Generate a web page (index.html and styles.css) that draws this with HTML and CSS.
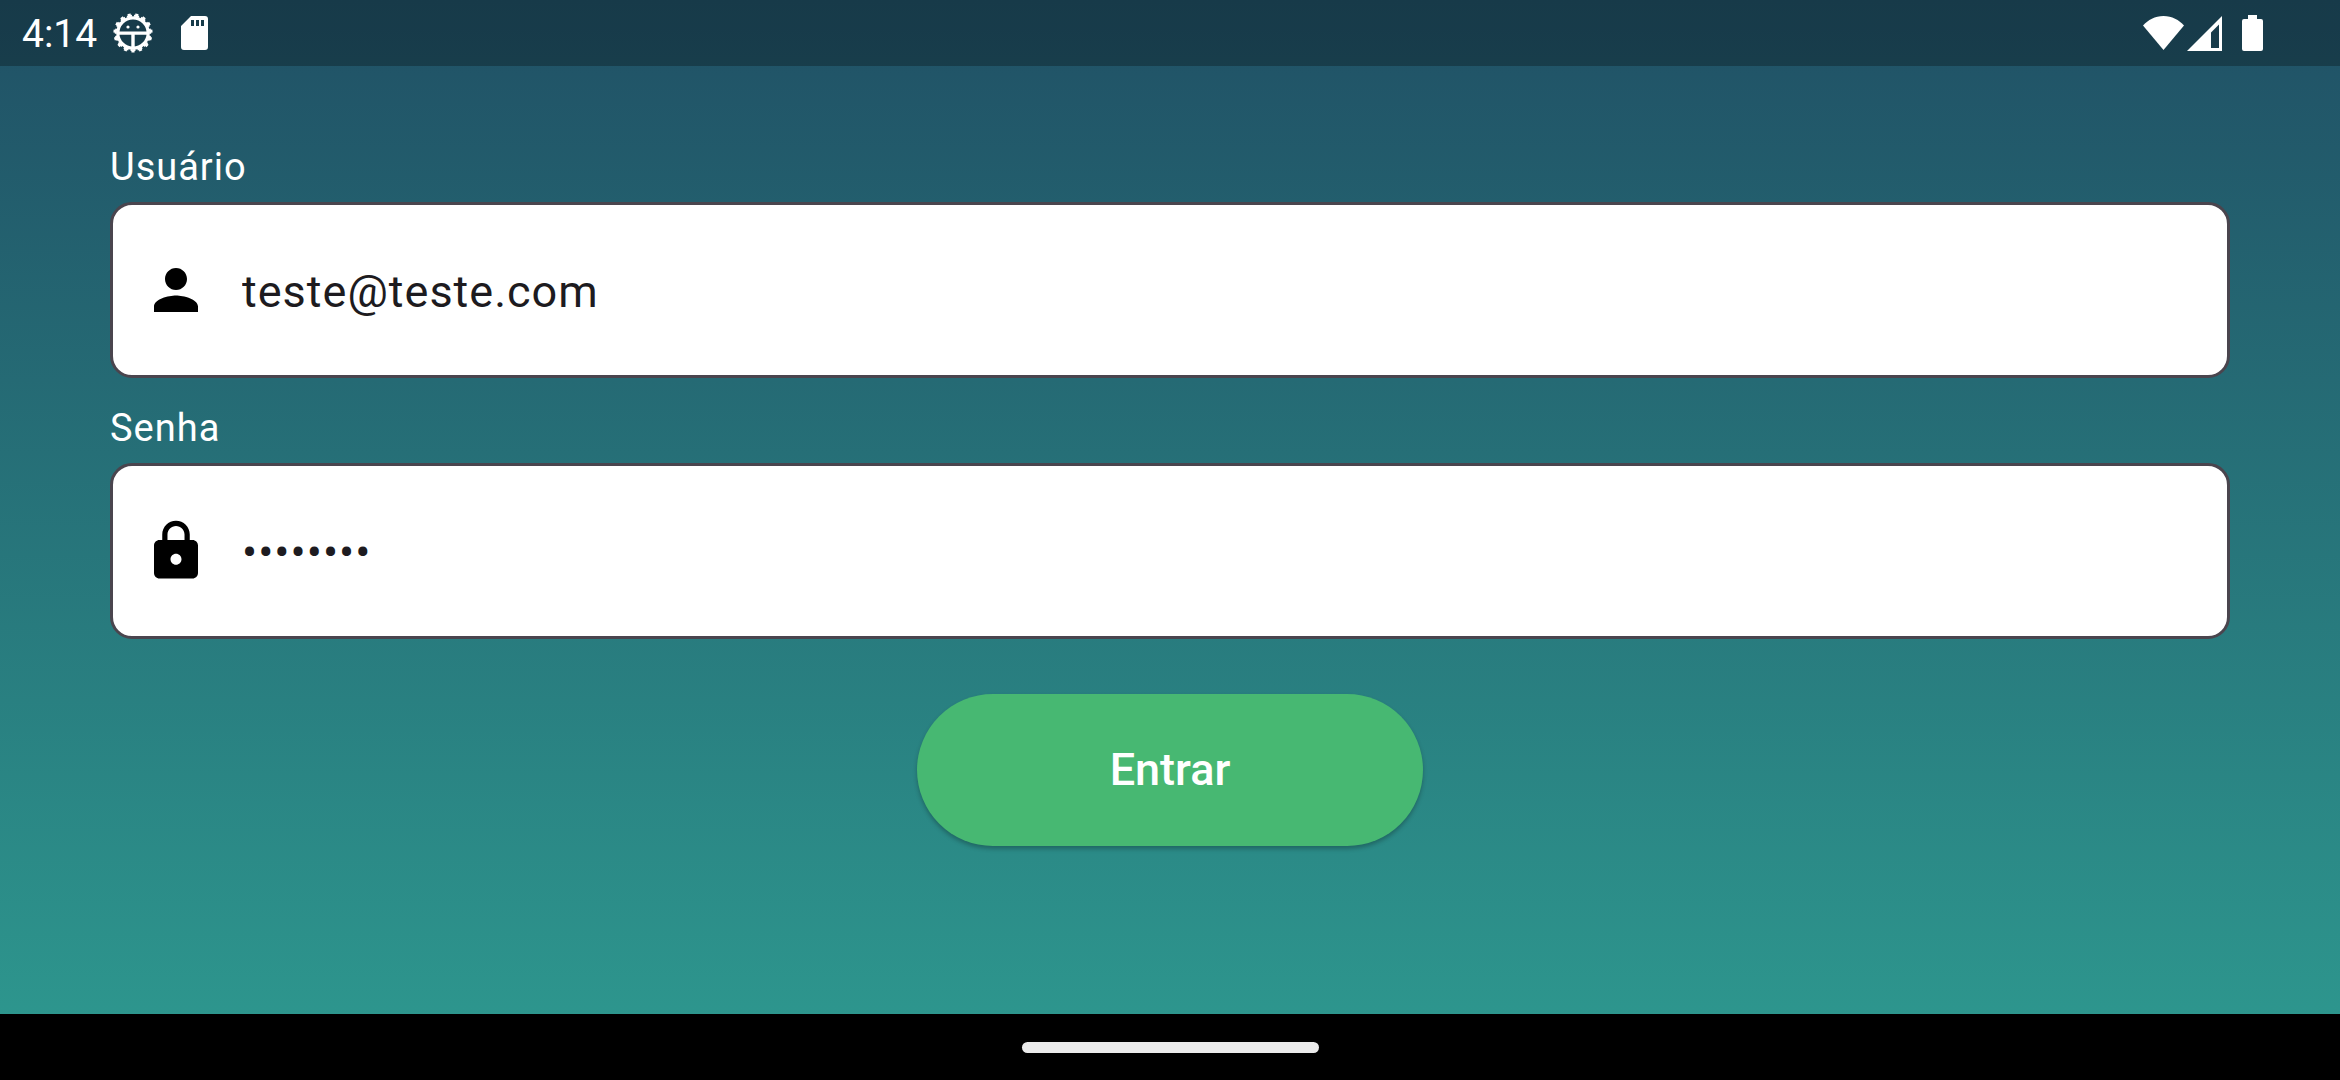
FILE: index.html
```html
<!DOCTYPE html>
<html lang="pt-BR">
<head>
<meta charset="utf-8">
<meta name="viewport" content="width=device-width, initial-scale=1">
<title>Entrar</title>
<link rel="stylesheet" href="styles.css">
</head>
<body>
<div class="screen">
  <header class="status-bar">
    <time class="clock">4:14</time>
    <svg class="status-icon gear" viewBox="0 0 40 40" aria-hidden="true">
      <g fill="none" stroke="currentColor">
        <circle cx="20" cy="20" r="15.200" stroke-width="3.200"/>
        <circle cx="20" cy="20" r="17.200" stroke-width="2" pathLength="150" stroke-dasharray="7 3" stroke-dashoffset="6"/>
        <circle cx="20" cy="20" r="18.600" stroke-width="2" pathLength="150" stroke-dasharray="4 6" stroke-dashoffset="4.500"/>
      </g>
      <path d="M6 18.500h28v3.200H21.700V35h-3.400V21.700H6z" fill="currentColor"/>
      <circle cx="15" cy="14" r="1.600" fill="currentColor"/>
      <circle cx="25" cy="14" r="1.600" fill="currentColor"/>
    </svg>
    <svg class="status-icon card" viewBox="0 0 27 34" aria-hidden="true">
      <path fill="currentColor" fill-rule="evenodd" d="M10 0h14a3 3 0 0 1 3 3v28a3 3 0 0 1-3 3H3a3 3 0 0 1-3-3V10zM10 4v6h3V4zm5 0v6h3V4zm5 0v6h3V4z"/>
    </svg>
    <div class="system-icons">
      <svg class="status-icon wifi" viewBox="0 0 41 34" aria-hidden="true">
        <path fill="currentColor" d="M20.500 34 0 9.500C5 4 12 0 20.500 0S36 4 41 9.500z"/>
      </svg>
      <svg class="status-icon signal" viewBox="0 0 35 35" aria-hidden="true">
        <path fill="currentColor" fill-rule="evenodd" d="M35 0v35H0zM32 8.500l-8 8V32h8z"/>
      </svg>
      <svg class="status-icon battery" viewBox="0 0 21 36" aria-hidden="true">
        <path fill="currentColor" d="M6 0h9v4h4a2 2 0 0 1 2 2v28a2 2 0 0 1-2 2H2a2 2 0 0 1-2-2V6a2 2 0 0 1 2-2h4z"/>
      </svg>
    </div>
  </header>

  <main class="content">
    <form class="login">
      <div class="field">
        <label class="label" for="user">Usuário</label>
        <div class="box">
          <svg class="icon" viewBox="0 0 24 24" aria-hidden="true"><path d="M12 12c2.210 0 4-1.790 4-4s-1.790-4-4-4-4 1.790-4 4 1.790 4 4 4zm0 2c-2.670 0-8 1.340-8 4v2h16v-2c0-2.660-5.330-4-8-4z"/></svg>
          <input class="input" id="user" type="email" value="teste@teste.com">
        </div>
      </div>
      <div class="field">
        <label class="label" for="password">Senha</label>
        <div class="box">
          <svg class="icon" viewBox="0 0 24 24" aria-hidden="true"><path d="M18 8h-1V6c0-2.760-2.240-5-5-5S7 3.240 7 6v2H6c-1.100 0-2 .9-2 2v10c0 1.100.9 2 2 2h12c1.100 0 2-.9 2-2V10c0-1.100-.9-2-2-2zm-6 9c-1.100 0-2-.9-2-2s.9-2 2-2 2 .9 2 2-.9 2-2 2zm3.100-9H8.900V6c0-1.710 1.390-3.100 3.100-3.100s3.100 1.390 3.100 3.100z"/></svg>
          <input class="input" id="password" type="password" value="12345678">
        </div>
      </div>
      <button class="submit" type="button">Entrar</button>
    </form>
  </main>

  <footer class="nav-bar"><div class="handle"></div></footer>
</div>
</body>
</html>
```
FILE: styles.css
```css
* {
  box-sizing: border-box;
}

body {
  margin: 0;
  font-family: Roboto, "Liberation Sans", sans-serif;
}

.screen {
  display: flex;
  flex-direction: column;
  min-height: 100vh;
  color: #fff;
  background: linear-gradient(#205065, #2e9a90);
}

.status-bar {
  display: flex;
  align-items: center;
  height: 66px;
  padding: 0 77px 0 22px;
  background: rgba(0, 0, 0, 0.27);
}

.clock {
  padding-top: 2px;
  font-size: 39px;
  line-height: 44px;
}

.status-icon {
  display: block;
  flex: none;
}

.gear {
  width: 40px;
  height: 40px;
  margin-left: 16px;
}

.card {
  width: 27px;
  height: 34px;
  margin-left: 28px;
}

.system-icons {
  display: flex;
  align-items: center;
  margin-left: auto;
}

.wifi {
  width: 41px;
  height: 34px;
}

.signal {
  width: 35px;
  height: 35px;
  margin-left: 3px;
}

.battery {
  width: 21px;
  height: 36px;
  margin-left: 20px;
}

.content {
  flex: 1;
  padding: 76px 110px 0;
}

.login {
  display: flex;
  flex-direction: column;
}

.field {
  display: flex;
  flex-direction: column;
  gap: 10px;
  margin-bottom: 25px;
}

.label {
  align-self: flex-start;
  font-size: 38px;
  line-height: 50px;
  letter-spacing: 1px;
}

.box {
  display: flex;
  align-items: center;
  gap: 33px;
  height: 176px;
  padding: 0 30px;
  border: 3px solid #4a454e;
  border-radius: 22px;
  background: #fff;
}

.icon {
  flex: none;
  width: 66px;
  height: 66px;
  fill: #000;
}

.input {
  flex: 1;
  min-width: 0;
  height: 66px;
  padding: 2px 0 0;
  border: 0;
  outline: 0;
  background: none;
  color: #1d1b20;
  font: 400 45px/64px Roboto, "Liberation Sans", sans-serif;
  letter-spacing: 1px;
}

.submit {
  align-self: center;
  width: 506px;
  height: 152px;
  margin-top: 30px;
  padding: 0;
  border: 0;
  border-radius: 76px;
  background: #47b872;
  box-shadow: 0 3px 4px rgba(0, 0, 0, 0.25);
  color: #fff;
  font: 500 45px/60px Roboto, "Liberation Sans", sans-serif;
}

.nav-bar {
  display: flex;
  align-items: center;
  justify-content: center;
  height: 66px;
  background: #000;
}

.handle {
  width: 297px;
  height: 11px;
  border-radius: 6px;
  background: #ebebeb;
}
```
